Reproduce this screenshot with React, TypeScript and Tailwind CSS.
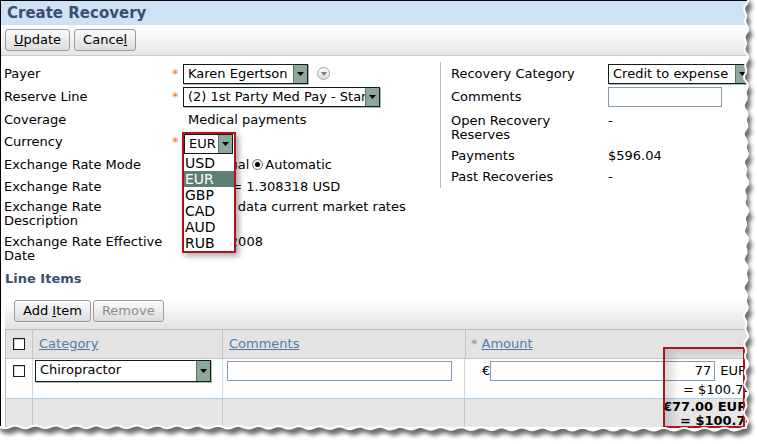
import React from "react";

const Arrow = () => (
  <svg width="7" height="4" viewBox="0 0 7 4">
    <path d="M0 0h7L3.5 4z" fill="#000" />
  </svg>
);

function Select({ text, className = "" }: { text: string; className?: string }) {
  return (
    <div
      className={`flex h-[20px] items-stretch border border-[#141c18] bg-white shadow-[1px_1px_0_#a7bbb1] ${className}`}
    >
      <span className="flex-1 overflow-hidden whitespace-nowrap pl-[4px] leading-[18px]">
        {text}
      </span>
      <span className="flex w-[14px] shrink-0 items-center justify-center border-l border-[#5d7367] bg-[#8ea79b]">
        <Arrow />
      </span>
    </div>
  );
}

const Star = () => <span className="w-[13px] shrink-0 pl-[2px] text-[#e07b2c]">*</span>;
const NoStar = () => <span className="w-[13px] shrink-0" />;

const Button = ({ children, disabled = false }: { children: React.ReactNode; disabled?: boolean }) => (
  <button
    className={`h-[22px] rounded-[3px] border border-[#9c9c9c] bg-gradient-to-b from-[#fbfbfb] to-[#dddddd] px-[8px] text-[13px] leading-[20px] ${
      disabled ? "text-[#8c8c8c]" : "text-black"
    }`}
  >
    {children}
  </button>
);

const Checkbox = () => (
  <span className="block h-[12px] w-[12px] border border-[#1e1e1e] bg-white shadow-[inset_1px_1px_0_#d0d0d0]" />
);

const Radio = ({ on = false }: { on?: boolean }) => (
  <span className="inline-flex h-[11px] w-[11px] items-center justify-center rounded-full border border-[#6f6f6f] bg-gradient-to-br from-[#e4e4e4] to-white align-[-1px]">
    {on && <span className="h-[5px] w-[5px] rounded-full bg-black" />}
  </span>
);

function TornEdge() {
  const R = 746;
  const B = 428;
  const right: string[] = [];
  for (let y = -5; y <= B; y += 3) {
    const x = R + Math.sin(y * 2.3) * 1.2 + Math.sin(y * 0.45 + 1) * 1.3;
    right.push(`${x.toFixed(1)},${y}`);
  }
  const bottom: string[] = [];
  for (let x = R; x >= -5; x -= 3) {
    const y = B + Math.sin(x * 2.1) * 1.2 + Math.sin(x * 0.31) * 1.4;
    bottom.push(`${x},${y.toFixed(1)}`);
  }
  const edge = [...right, ...bottom];
  const paper = `M-5,-5 L${edge.join(" L")} Z`;
  const outer = "M-20,-20 H800 V480 H-20 Z ";
  return (
    <svg className="pointer-events-none absolute left-0 top-0" width="757" height="444">
      <defs>
        <clipPath id="outside">
          <path d={outer + paper} clipRule="evenodd" />
        </clipPath>
        <filter id="soft" x="-5%" y="-5%" width="110%" height="110%">
          <feGaussianBlur stdDeviation="2" />
        </filter>
      </defs>
      <path d={outer + paper} fillRule="evenodd" fill="#fff" />
      <g clipPath="url(#outside)">
        <path d={paper} transform="translate(4,6)" fill="#4a4a4a" opacity="0.8" filter="url(#soft)" />
      </g>
      <polyline points={edge.join(" ")} fill="none" stroke="#fff" strokeWidth="2" />
    </svg>
  );
}

export default function App() {
  return (
    <div className="relative h-[444px] w-[757px] overflow-hidden bg-white font-['DejaVu_Sans',Verdana,sans-serif] text-[13px] leading-[14px] text-black">
      <div className="flex h-[444px] w-[757px] flex-col border-l border-t border-black">
        {/* title */}
        <div className="flex h-[24px] items-center bg-[#cee2f6] pl-[6px] text-[15px] font-bold text-[#3a4e70]">
          Create Recovery
        </div>

        {/* toolbar */}
        <div className="flex h-[31px] items-center gap-[4px] border-b border-[#c9c9c9] bg-gradient-to-b from-white to-[#e7e7e7] pl-[4px]">
          <Button>
            <u>U</u>pdate
          </Button>
          <Button>
            Cance<u>l</u>
          </Button>
        </div>

        {/* form */}
        <div className="flex">
          <div className="w-[439px] pl-[3px] pt-[6px]">
            <div className="flex h-[23px] items-center">
              <div className="w-[166px]">Payer</div>
              <Star />
              <Select text="Karen Egertson" className="w-[125px]" />
              <span className="ml-[9px] flex h-[13px] w-[13px] items-center justify-center rounded-full border border-[#a3a3a3] bg-gradient-to-b from-white to-[#dcdcdc]">
                <svg width="6" height="4" viewBox="0 0 6 4">
                  <path d="M0 0h6L3 4z" fill="#7a7a7a" />
                </svg>
              </span>
            </div>
            <div className="flex h-[24px] items-center">
              <div className="w-[166px]">Reserve Line</div>
              <Star />
              <Select text="(2) 1st Party Med Pay - Standard" className="w-[197px]" />
            </div>
            <div className="flex h-[22px] items-center">
              <div className="w-[166px]">Coverage</div>
              <NoStar />
              <span className="pl-[5px]">Medical payments</span>
            </div>
            <div className="flex h-[22px] items-center">
              <div className="w-[166px]">Currency</div>
              <Star />
              <div className="relative h-[20px] w-[50px]">
                <div className="absolute -left-[1px] top-[0px] z-10 h-[121px] w-[54px] border-2 border-[#b3121c] bg-white shadow-[3px_3px_6px_rgba(0,0,0,0.35)]">
                  <Select text="EUR" className="h-[19px] w-[49px] shadow-none" />
                  <div className="flex flex-col pt-[1px]">
                    {["USD", "EUR", "GBP", "CAD", "AUD", "RUB"].map((c) => (
                      <div
                        key={c}
                        className={`h-[16px] pl-[1px] text-[14px] leading-[16px] ${
                          c === "EUR" ? "bg-[#5f7e74] text-white" : ""
                        }`}
                      >
                        {c}
                      </div>
                    ))}
                  </div>
                </div>
              </div>
            </div>
            <div className="flex h-[23px] items-center">
              <div className="w-[166px]">Exchange Rate Mode</div>
              <NoStar />
              <span className="flex items-center gap-[3px] pl-[5px]">
                <Radio /> Manual <Radio on />
                <span className="-ml-[1px]">Automatic</span>
              </span>
            </div>
            <div className="flex h-[21px] items-center">
              <div className="w-[166px]">Exchange Rate</div>
              <NoStar />
              <span className="pl-[5px]">1 EUR = 1.308318 USD</span>
            </div>
            <div className="flex h-[38px] items-start pt-[3px]">
              <div className="w-[166px]">
                Exchange Rate
                <br />
                Description
              </div>
              <NoStar />
              <span className="whitespace-nowrap pl-[5px]">Xignite data current market rates</span>
            </div>
            <div className="flex h-[30px] items-start">
              <div className="w-[166px] whitespace-nowrap">
                Exchange Rate Effective
                <br />
                Date
              </div>
              <NoStar />
              <span className="pl-[5px]">10/29/2008</span>
            </div>
          </div>

          <div className="mt-[6px] self-start border-l border-[#a9bfd5] pl-[10px]">
            <div className="flex h-[23px] items-center">
              <div className="w-[157px]">Recovery Category</div>
              <Select text="Credit to expense" className="w-[142px]" />
            </div>
            <div className="flex h-[24px] items-center">
              <div className="w-[157px]">Comments</div>
              <span className="h-[20px] w-[114px] border border-[#7f9db9] bg-white" />
            </div>
            <div className="flex h-[37px] items-start pt-[5px]">
              <div className="w-[157px]">
                Open Recovery
                <br />
                Reserves
              </div>
              <span>-</span>
            </div>
            <div className="flex h-[20px] items-center">
              <div className="w-[157px]">Payments</div>
              <span>$596.04</span>
            </div>
            <div className="flex h-[22px] items-center">
              <div className="w-[157px]">Past Recoveries</div>
              <span>-</span>
            </div>
          </div>
        </div>

        {/* line items */}
        <div className="pl-[4px] pt-[7px] font-bold text-[#3a4e70]">Line Items</div>
        <div className="ml-[4px] mt-[4px] flex h-[39px] items-end gap-[2px] bg-gradient-to-b from-white from-[25%] to-[#e3e3e3] pb-[7px] pl-[9px]">
          <Button>
            Add <u>I</u>tem
          </Button>
          <Button disabled>Remove</Button>
        </div>

        <div className="ml-[4px] w-[760px] border-l border-t border-[#bdbdb3]">
          <div className="flex h-[28px] bg-[#e3e3e3]">
            <div className="flex w-[27px] items-center justify-center border-r border-[#c6c6be]">
              <Checkbox />
            </div>
            <div className="flex w-[190px] items-center border-r border-[#c6c6be] pl-[6px]">
              <span className="text-[#5579a7] underline">Category</span>
            </div>
            <div className="flex w-[243px] items-center border-r border-[#c6c6be] pl-[6px]">
              <span className="text-[#5579a7] underline">Comments</span>
            </div>
            <div className="flex flex-1 items-center pl-[5px]">
              <span className="mr-[4px] text-[#7f93ab]">*</span>
              <span className="text-[#5579a7] underline">Amount</span>
            </div>
          </div>

          <div className="flex h-[40px] border-t border-[#c6c6be] bg-white">
            <div className="flex w-[27px] justify-center border-r border-[#c9dbeb] pt-[6px]">
              <Checkbox />
            </div>
            <div className="w-[190px] border-r border-[#c9dbeb] pl-[2px] pt-[1px]">
              <Select text="Chiropractor" className="h-[22px] w-[176px]" />
            </div>
            <div className="w-[243px] border-r border-[#c9dbeb] pl-[4px] pt-[2px]">
              <span className="block h-[20px] w-[225px] border border-[#7f9db9] bg-white" />
            </div>
            <div className="flex w-[300px] shrink-0 flex-col whitespace-nowrap pl-[17px] pt-[2px]">
              <div className="flex h-[20px] items-center">
                <span>€</span>
                <span className="flex h-[20px] w-[225px] items-center justify-end border border-[#7f9db9] bg-white pr-[3px]">
                  77
                </span>
                <span className="ml-[5px]">EUR</span>
              </div>
              <div className="mt-[2px] pl-[201px]">= $100.74</div>
            </div>
          </div>

          <div className="flex h-[29px] border-t border-[#aecbe6] bg-[#e6e6e6]">
            <div className="w-[27px] border-r border-[#c6c6be]" />
            <div className="w-[190px] border-r border-[#c6c6be]" />
            <div className="w-[243px] border-r border-[#c6c6be]" />
            <div className="flex w-[300px] shrink-0 flex-col whitespace-nowrap pl-[198px] pt-[1px] font-bold">
              <div>€77.00 EUR</div>
              <div className="pl-[17px]">= $100.74</div>
            </div>
          </div>
        </div>
      </div>

      <div className="absolute left-[663px] top-[347px] h-[81px] w-[82px] border-2 border-[#b3121c] shadow-[inset_8px_4px_8px_rgba(0,0,0,0.14)]" />

      <TornEdge />
    </div>
  );
}
